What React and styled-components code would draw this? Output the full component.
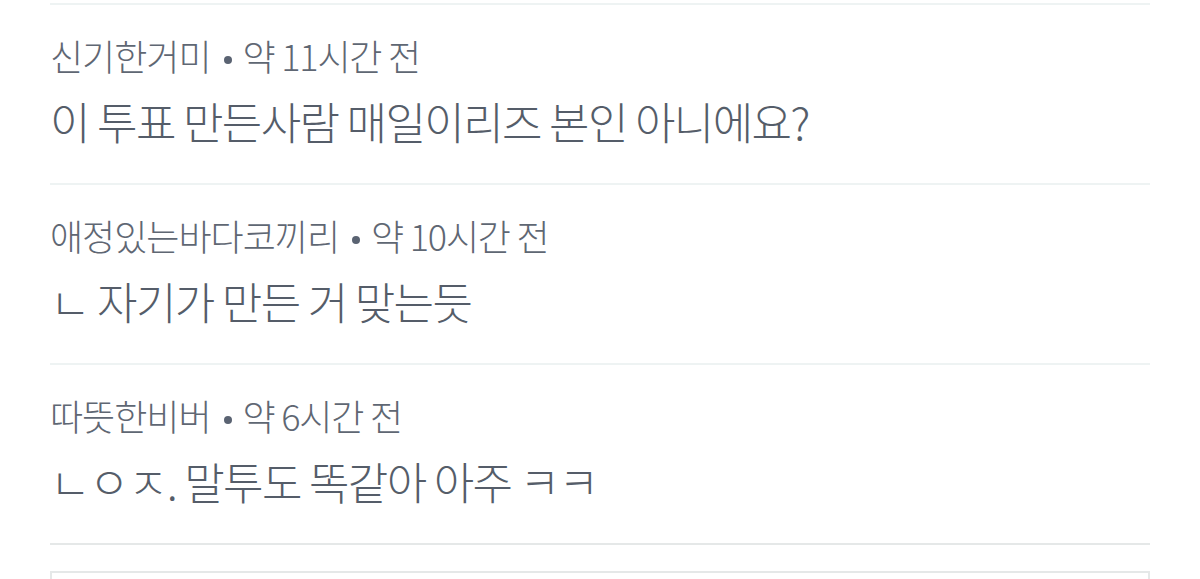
import React from "react";
import styled, { createGlobalStyle } from "styled-components";

const Global = createGlobalStyle`
  html, body { margin: 0; padding: 0; background: #ffffff; }
  body { font-family: "Noto Sans CJK KR", "Noto Sans", sans-serif; }
`;

const Page = styled.div`
  width: 1200px;
  height: 579px;
  overflow: hidden;
  padding: 3px 50px 0;
  box-sizing: border-box;
`;

const List = styled.ul`
  list-style: none;
  margin: 0;
  padding: 0;
  border-bottom: 2px solid #e5e8e8;
`;

const Item = styled.li`
  height: 180px;
  box-sizing: border-box;
  border-top: 2px solid #eef3f3;
  padding-top: 26px;
`;

const Meta = styled.div`
  font-size: 36px;
  font-weight: 300;
  line-height: 48px;
  color: #5f6773;
  letter-spacing: -1px;
  white-space: nowrap;
`;

const Time = styled.span`
  letter-spacing: -1.2px;
`;

const Dot = styled.span`
  display: inline-block;
  width: 8px;
  height: 8px;
  border-radius: 50%;
  background: #5a6372;
  margin: 0 11px 0 13px;
  vertical-align: middle;
  position: relative;
  top: -1px;
`;

const Body = styled.p`
  margin: 14px 0 0;
  font-size: 44px;
  font-weight: 300;
  line-height: 56px;
  color: #555d69;
  letter-spacing: -1.6px;
  white-space: nowrap;
`;

const Composer = styled.div`
  margin-top: 26px;
  height: 40px;
  border: 2px solid #e5e8e8;
  border-bottom: none;
  background: #ffffff;
`;

const comments = [
  { author: "신기한거미", time: "약 11시간 전", text: "이 투표 만든사람 매일이리즈 본인 아니에요?" },
  { author: "애정있는바다코끼리", time: "약 10시간 전", text: "ㄴ 자기가 만든 거 맞는듯" },
  { author: "따뜻한비버", time: "약 6시간 전", text: "ㄴㅇㅈ. 말투도 똑같아 아주 ㅋㅋ" },
];

export default function App() {
  return (
    <Page>
      <Global />
      <List>
        {comments.map((c) => (
          <Item key={c.author}>
            <Meta>
              {c.author}
              <Dot />
              <Time>{c.time}</Time>
            </Meta>
            <Body>{c.text}</Body>
          </Item>
        ))}
      </List>
      <Composer />
    </Page>
  );
}
